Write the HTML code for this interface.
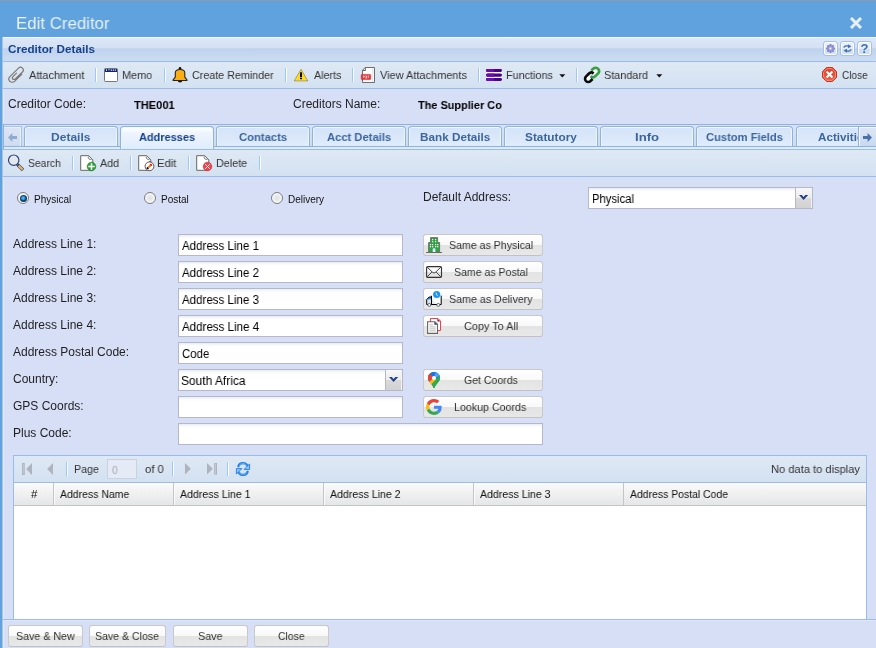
<!DOCTYPE html>
<html>
<head>
<meta charset="utf-8">
<title>Edit Creditor</title>
<style>
*{box-sizing:border-box;margin:0;padding:0}
html,body{width:876px;height:648px;overflow:hidden}
body{position:relative;background:#d6dff6;font-family:"Liberation Sans",sans-serif;font-size:11px;color:#333}
.a{position:absolute}
svg{position:absolute;overflow:visible}
.t{position:absolute;white-space:nowrap;line-height:14px;height:14px;transform-origin:0 50%;will-change:transform}
.sep{position:absolute;width:2px;height:14px;border-left:1px solid #98c8ff;border-right:1px solid #fff}
.inp{position:absolute;height:22px;background:#fff;border:1px solid #b5b8c8;background-image:linear-gradient(#e9ebf0,#f8f9fb 2px,#fff 4px)}
.btn{position:absolute;height:22px;border:1px solid #c9c9c9;border-bottom-color:#c2c2c2;border-radius:3px;background-image:linear-gradient(#ffffff,#f8f8f8 50%,#e3e3e3 50%,#e8e8e8)}
.tab{position:absolute;top:126px;height:20px;border:1px solid #8db2e3;border-bottom:none;border-radius:4px 4px 0 0;background-image:linear-gradient(#d6e4f8,#dae7fa 50%,#dfecfc);box-shadow:inset 0 1px 0 #f6faff,inset 1px 0 0 #f0f6fd,inset -1px 0 0 #f0f6fd}
.tab.act{background-image:linear-gradient(#ffffff,#eef4fd 30%,#deecfd);height:23px}
.radio{position:absolute;width:12px;height:12px;border-radius:50%;border:1px solid #7d7d7d;background:radial-gradient(circle at 50% 50%,#dde0e4 0,#e8eaec 35%,#f8f8f8 65%,#ffffff 100%)}
.trig{position:absolute;width:17px;height:22px;border:1px solid #b5b8c8;border-left:none;background-image:linear-gradient(#f8f8f8,#ececec 48%,#d9d9d9 52%,#d2d2d2);box-shadow:inset -1px 0 0 #f2f2f2}
.tool{position:absolute;top:41px;width:15px;height:15px;border:1px solid #a4c0ea;border-radius:3px;box-shadow:inset 0 0 0 1px #fff;background-image:linear-gradient(#e9f0fb,#e3ecfa 50%,#d0dff6 50%,#d3e1f7)}
.gh{position:absolute;top:483px;height:22px;border-right:1px solid #c5c5c5;border-left:1px solid #fbfbfb}
</style>
</head>
<body>
<!-- window frame + title bar -->
<div class="a" style="left:0;top:0;width:876px;height:648px;background:#5fa2dd"></div>
<div class="a" style="left:0;top:0;width:876px;height:1px;background:#8e9aac"></div>
<svg style="left:849px;top:16px" width="14" height="14" viewBox="0 0 14 14"><path d="M2 2 L12 12 M12 2 L2 12" stroke="#e8f0fa" stroke-width="3"/></svg>

<!-- window body -->
<div class="a" style="left:2px;top:37px;width:874px;height:611px;background:#d6dff6;border-left:1px solid #a6c3ec"></div>
<div class="a" style="left:3px;top:37px;width:1px;height:611px;background:#e3e9f9"></div>

<!-- panel header -->
<div class="a" style="left:3px;top:37px;width:873px;height:25px;border-top:1px solid #f6f9fe;border-bottom:1px solid #99bce8;background-image:linear-gradient(#dde8f7,#d4e1f4 42%,#bfd2ee 47%,#c3d5ef 62%,#cddcf2)"></div>
<div class="tool" style="left:823px"></div>
<div class="tool" style="left:840px"></div>
<div class="tool" style="left:857px"></div>
<!-- gear -->
<svg style="left:826px;top:44px" width="9" height="9" viewBox="0 0 9 9"><g stroke="#8587cc" stroke-width="2.1" stroke-linecap="round"><path d="M4.5 0.9V8.1M0.9 4.5H8.1M2 2L7 7M7 2L2 7"/></g><circle cx="4.5" cy="4.5" r="3.2" fill="#8587cc"/><circle cx="4.5" cy="4.5" r="2.2" fill="#a3a6dc"/><circle cx="4.5" cy="4.5" r="1" fill="#eef2fb"/></svg>
<!-- refresh arrows -->
<svg style="left:843px;top:44px" width="9" height="9" viewBox="0 0 9 9"><path d="M0.8 3.6 C1.4 1.8 4 1.4 6 2.2" fill="none" stroke="#3c70a8" stroke-width="1.3"/><path d="M5.2 0.2 L8.4 2.6 L5 4.2 Z" fill="#3c70a8"/><path d="M8.2 5.4 C7.6 7.2 5 7.6 3 6.8" fill="none" stroke="#3c70a8" stroke-width="1.3"/><path d="M3.8 8.8 L0.6 6.4 L4 4.8 Z" fill="#3c70a8"/></svg>
<!-- help -->
<div class="a" style="left:857px;top:41px;width:15px;height:15px;font:bold 13px/15px 'Liberation Sans',sans-serif;color:#3c70a8;text-align:center;will-change:transform">?</div>


<!-- toolbar -->
<div class="a" style="left:3px;top:62px;width:873px;height:27px;border-bottom:1px solid #99bce8;background-image:linear-gradient(#dfe9f5,#d3e1f1)"></div>
<div class="sep" style="left:95px;top:68px"></div>
<div class="sep" style="left:164px;top:68px"></div>
<div class="sep" style="left:285px;top:68px"></div>
<div class="sep" style="left:352px;top:68px"></div>
<div class="sep" style="left:478px;top:68px"></div>
<div class="sep" style="left:576px;top:68px"></div>
<!-- paperclip -->
<svg style="left:8px;top:67px" width="16" height="16" viewBox="0 0 16 16"><path d="M13.7 7.3 L6.6 14.3 C5.3 15.6 3.1 15.6 1.8 14.3 C0.5 13 0.6 11 1.9 9.7 L10.5 1.2 C11.6 0.1 13.4 0.1 14.5 1.2 C15.6 2.3 15.6 3.9 14.5 5 L7.3 12 C6.6 12.7 5.5 12.7 4.8 12 C4.1 11.3 4.2 10.3 4.9 9.6 L8.5 6.1" fill="none" stroke="#7b7876" stroke-width="1.15" stroke-linecap="round"/></svg>
<!-- memo -->
<svg style="left:104px;top:68px" width="14" height="14" viewBox="0 0 14 14"><rect x="0.5" y="0.5" width="13" height="13" rx="0.8" fill="#fff" stroke="#777" stroke-width="1"/><rect x="1" y="1" width="12" height="3" fill="#0d2474"/><path d="M2.5 1.3V3M4.3 1.8H5.8M7.3 1.3V3M9.3 1.3V3M11.3 1.3V3" stroke="#e8ecff" stroke-width="0.9"/></svg>
<!-- bell -->
<svg style="left:172px;top:67px" width="16" height="16" viewBox="0 0 16 16"><circle cx="8.05" cy="1.3" r="1.3" fill="#111"/><path d="M5.6 13.8 A2.5 2.2 0 0 0 10.5 13.8 Z" fill="#111"/><path d="M1.1 13.5 V12.8 L3.3 10.2 V5.8 C3.3 3.5 5.3 2.5 8.05 2.5 C10.8 2.5 12.8 3.5 12.8 5.8 V10.2 L15 12.8 V13.5 Z" fill="#fbad15" stroke="#242424" stroke-width="1.1" stroke-linejoin="round"/></svg>
<!-- warning -->
<svg style="left:294px;top:69px" width="14" height="13" viewBox="0 0 14 13"><path d="M7 0.5 L13.6 11.8 H0.4 Z" fill="#ffd91c" stroke="#7a6a16" stroke-width="0.7" stroke-linejoin="round"/><path d="M7 1.6 L12.6 11.2 H1.4 Z" fill="none" stroke="#ffe55a" stroke-width="0.5"/><rect x="6" y="3.3" width="2" height="5" fill="#0a0a0a"/><rect x="6" y="9" width="2" height="1.2" fill="#0a0a0a"/></svg>
<!-- pdf -->
<svg style="left:361px;top:67px" width="15" height="16" viewBox="0 0 15 16"><path d="M4.2 0.5 H13.5 V15.5 H1.5 V3.3 Z" fill="#fdfdfd" stroke="#6d6d6d" stroke-width="1" stroke-linejoin="round"/><path d="M11.6 1.2V14.8" stroke="#e6e6e6" stroke-width="1.2"/><path d="M4.4 0.8 V3.5 H1.6" fill="none" stroke="#555" stroke-width="0.9"/><rect x="0.2" y="7.4" width="9.5" height="5.2" rx="0.8" fill="#ea353d" stroke="#b8202a" stroke-width="0.5"/><path d="M2 9h1.2v1.2H2M4.3 9h1.3v2.2H4.3M6.8 9h1.4M6.8 10.2h1" stroke="#ffd0d0" stroke-width="0.9" fill="none"/></svg>
<!-- functions -->
<svg style="left:486px;top:69px" width="16" height="12" viewBox="0 0 16 12"><rect x="0" y="2.6" width="16" height="7" fill="#f3f7fb"/><rect x="0" y="0" width="16" height="2.9" rx="1.4" fill="#4b0087"/><rect x="0" y="4.4" width="16" height="3.3" rx="1.6" fill="#4b0087"/><rect x="0" y="9" width="16" height="2.9" rx="1.4" fill="#4b0087"/><path d="M1.4 0 H8 V2.9 H1.4 A1.4 1.4 0 0 1 1.4 0 Z M1.6 4.4 H8 V7.7 H1.6 A1.6 1.6 0 0 1 1.6 4.4 Z M1.4 9 H8 V11.9 H1.4 A1.4 1.4 0 0 1 1.4 9 Z" fill="#6a0cb0"/></svg>
<svg style="left:559px;top:74px" width="7" height="4" viewBox="0 0 7 4"><path d="M0.3 0.2 H6.3 L3.3 3.6 Z" fill="#111"/></svg>
<!-- link -->
<svg style="left:584px;top:67px" width="16" height="16" viewBox="0 0 16 16"><ellipse cx="10.6" cy="5" rx="2.6" ry="1.4" transform="rotate(-45 10.6 5)" fill="#fff"/><ellipse cx="4.4" cy="11.2" rx="2.4" ry="1.4" transform="rotate(-45 4.4 11.2)" fill="#fff"/><path d="M6.6 9.2 C8.2 10.6 10.2 10.4 11.4 9.2 L14.2 6.4 C15.4 5.2 15.6 3.2 14.2 1.8 C13 0.6 10.8 0.4 9.4 1.6 L7.2 3.4" fill="none" stroke="#37a040" stroke-width="2.6"/><path d="M9.6 6.4 C8 5 6.2 5.3 5 6.5 L2.1 9.4 C0.7 10.8 0.7 12.9 2 14.1 C3.2 15.3 5.3 15.3 6.5 14.1 L8.6 12" fill="none" stroke="#0a0a0a" stroke-width="2.6"/></svg>
<svg style="left:656px;top:74px" width="7" height="4" viewBox="0 0 7 4"><path d="M0.3 0.2 H6.3 L3.3 3.6 Z" fill="#111"/></svg>
<!-- close -->
<svg style="left:822px;top:67px" width="15" height="15" viewBox="0 0 15 15"><defs><linearGradient id="cg" x1="0" y1="0" x2="0" y2="1"><stop offset="0" stop-color="#e23a1f"/><stop offset="1" stop-color="#f2614a"/></linearGradient></defs><path d="M4.6 0.5 H10.4 L14.5 4.6 V10.4 L10.4 14.5 H4.6 L0.5 10.4 V4.6 Z" fill="url(#cg)" stroke="#c9321b" stroke-width="1"/><path d="M5 1.6 H10 L13.4 5 V10 L10 13.4 H5 L1.6 10 V5 Z" fill="none" stroke="#f4a090" stroke-width="0.8"/><path d="M4.6 4.6 L10.4 10.4 M10.4 4.6 L4.6 10.4" stroke="#fff" stroke-width="2.1"/></svg>


<!-- tab bar -->
<div class="a" style="left:3px;top:124px;width:873px;height:26px;border-top:1px solid #8db2e3;background-image:linear-gradient(#d7e3f4,#cbdbef)"></div>
<div class="a" style="left:3px;top:146px;width:873px;height:4px;background:#deecfd;border-top:1px solid #8db2e3;border-bottom:1px solid #99bce8"></div>
<div class="tab" style="left:24px;width:94px"></div>
<div class="tab act" style="left:120px;width:94px"></div>
<div class="tab" style="left:216px;width:94px"></div>
<div class="tab" style="left:312px;width:94px"></div>
<div class="tab" style="left:408px;width:94px"></div>
<div class="tab" style="left:504px;width:94px"></div>
<div class="tab" style="left:600px;width:94px"></div>
<div class="tab" style="left:696px;width:97px"></div>
<div class="tab" style="left:796px;width:94px"></div>
<!-- scrollers -->
<div class="a" style="left:3px;top:124px;width:1px;height:26px;background:#8db2e3;z-index:6"></div>
<div class="a" style="left:4px;top:126px;width:18px;height:20px;z-index:5;background-image:linear-gradient(#dde5f3,#cfdcf0);border-top:1px solid #a9c3ea;border-right:1px solid #a9c3ea;box-shadow:inset -1px 1px 0 #e9f0fa"></div>
<div class="a" style="left:858px;top:126px;width:18px;height:20px;z-index:5;background-image:linear-gradient(#dfe6f3,#d3dff2 55%,#c8d9f2);border-top:1px solid #8db2e3;border-left:1px solid #8db2e3;box-shadow:inset 1px 1px 0 #f4f8fd"></div>
<svg style="left:8px;top:133px;z-index:6" width="9" height="9" viewBox="0 0 9 9"><path d="M0 4.5 L4.4 0 V3 H9 V6 H4.4 V9 Z" fill="#8fabd2"/></svg>
<svg style="left:863px;top:133px;z-index:6" width="9" height="9" viewBox="0 0 9 9"><path d="M9 4.5 L4.6 0 V3 H0 V6 H4.6 V9 Z" fill="#4a72aa"/></svg>

<!-- tab toolbar -->
<div class="a" style="left:3px;top:150px;width:873px;height:27px;border-bottom:1px solid #99bce8;background-image:linear-gradient(#dfe9f5,#d3e1f1)"></div>
<div class="sep" style="left:72px;top:156px"></div>
<div class="sep" style="left:130px;top:156px"></div>
<div class="sep" style="left:188px;top:156px"></div>
<div class="sep" style="left:259px;top:156px"></div>
<!-- search -->
<svg style="left:8px;top:154px" width="17" height="17" viewBox="0 0 17 17"><path d="M9.4 10.4 L15 16" stroke="#2d4373" stroke-width="3.4"/><path d="M10.6 11.6 L14.6 15.6" stroke="#e9b262" stroke-width="2.2"/><circle cx="5.7" cy="6.2" r="5.2" fill="#e3e8ef" stroke="#2d4373" stroke-width="1.2"/></svg>
<!-- add -->
<svg style="left:80px;top:155px" width="17" height="16" viewBox="0 0 17 16"><path d="M0.7 0.7 H8.8 L12.8 4.9 V15.3 H0.7 Z" fill="#fff" stroke="#666" stroke-width="1" stroke-linejoin="round"/><path d="M8.9 1.4 C7.2 2.6 9 5.2 11.6 4.2" fill="#f2f2f2" stroke="#666" stroke-width="0.9"/><circle cx="11.5" cy="11.5" r="4.3" fill="#2fa037" stroke="#1f7a2a" stroke-width="0.6"/><path d="M11.5 8.3V14.7M8.3 11.5H14.7" stroke="#fff" stroke-width="1.5"/></svg>
<!-- edit -->
<svg style="left:138px;top:155px" width="17" height="16" viewBox="0 0 17 16"><path d="M0.7 0.7 H8.8 L12.8 4.9 V15.3 H0.7 Z" fill="#fff" stroke="#666" stroke-width="1" stroke-linejoin="round"/><path d="M8.9 1.4 C7.2 2.6 9 5.2 11.6 4.2" fill="#f2f2f2" stroke="#666" stroke-width="0.9"/><circle cx="11.5" cy="11.3" r="4.4" fill="#fff" stroke="#5b3e48" stroke-width="0.9"/><path d="M11.5 6.9V5.9" stroke="#5b3e48" stroke-width="0.8"/><path d="M9.6 13.3 L13.2 9.6" stroke="#d08a1a" stroke-width="2"/><path d="M9 13.9 L10.1 12.8" stroke="#000" stroke-width="2"/><path d="M12.5 10.3 L13.6 9.2" stroke="#f00" stroke-width="2.2"/></svg>
<!-- delete -->
<svg style="left:196px;top:155px" width="17" height="16" viewBox="0 0 17 16"><path d="M0.7 0.7 H8.8 L12.8 4.9 V15.3 H0.7 Z" fill="#fff" stroke="#666" stroke-width="1" stroke-linejoin="round"/><path d="M8.9 1.4 C7.2 2.6 9 5.2 11.6 4.2" fill="#f2f2f2" stroke="#666" stroke-width="0.9"/><circle cx="11.5" cy="11.5" r="4.3" fill="#f0434e" stroke="#c2303a" stroke-width="0.6"/><path d="M9.2 9.2L13.8 13.8M13.8 9.2L9.2 13.8" stroke="#fff" stroke-width="1"/></svg>


<!-- radios -->
<div class="radio" style="left:17px;top:192px"></div>
<div class="a" style="left:19.5px;top:194.5px;width:7px;height:7px;border-radius:50%;background:radial-gradient(circle 3.6px at 46% 44%,#8fe0f6 0,#35a8e6 25%,#2190d6 48%,#114273 72%,#0f3560 100%)"></div>
<div class="radio" style="left:144px;top:192px"></div>
<div class="radio" style="left:271px;top:192px"></div>
<div class="inp" style="left:588px;top:187px;width:208px"></div>
<div class="trig" style="left:796px;top:187px"></div>
<svg style="left:798.8px;top:195px" width="9.2" height="5.2" viewBox="0 0 9.2 5.2"><path d="M0 0 H2.8 L4.6 1.9 L6.4 0 H9.2 L4.6 5.1 Z" fill="#1f3f8a"/></svg>

<!-- fields -->
<div class="inp" style="left:178px;top:234px;width:225px"></div>
<div class="inp" style="left:178px;top:261px;width:225px"></div>
<div class="inp" style="left:178px;top:288px;width:225px"></div>
<div class="inp" style="left:178px;top:315px;width:225px"></div>
<div class="inp" style="left:178px;top:342px;width:225px"></div>
<div class="inp" style="left:178px;top:369px;width:208px"></div>
<div class="trig" style="left:386px;top:369px"></div>
<svg style="left:388.8px;top:377px" width="9.2" height="5.2" viewBox="0 0 9.2 5.2"><path d="M0 0 H2.8 L4.6 1.9 L6.4 0 H9.2 L4.6 5.1 Z" fill="#1f3f8a"/></svg>
<div class="inp" style="left:178px;top:396px;width:225px"></div>
<div class="inp" style="left:178px;top:423px;width:365px"></div>

<!-- side buttons -->
<div class="btn" style="left:423px;top:234px;width:120px"></div>
<div class="btn" style="left:423px;top:261px;width:120px"></div>
<div class="btn" style="left:423px;top:288px;width:120px"></div>
<div class="btn" style="left:423px;top:315px;width:120px"></div>
<div class="btn" style="left:423px;top:369px;width:120px"></div>
<div class="btn" style="left:423px;top:396px;width:120px"></div>
<!-- building -->
<svg style="left:426px;top:237px" width="16" height="16" viewBox="0 0 16 16"><path d="M2.6 15.3 V5.6 H4.6 V0.6 H11.6 V5.6 H13.6 V15.3 Z" fill="#2fa53f" stroke="#6d6672" stroke-width="0.9"/><path d="M0 15.5 H16" stroke="#6a6a6a" stroke-width="1"/><g fill="#fff"><rect x="6" y="2" width="1.2" height="1.2"/><rect x="9" y="2" width="1.2" height="1.2"/><rect x="6" y="4.1" width="1.2" height="1.2"/><rect x="9" y="4.1" width="1.2" height="1.2"/><rect x="3.9" y="7" width="1.2" height="1.2"/><rect x="6" y="7" width="1.2" height="1.2"/><rect x="9" y="7" width="1.2" height="1.2"/><rect x="11.1" y="7" width="1.2" height="1.2"/><rect x="3.9" y="9.1" width="1.2" height="1.2"/><rect x="6" y="9.1" width="1.2" height="1.2"/><rect x="9" y="9.1" width="1.2" height="1.2"/><rect x="11.1" y="9.1" width="1.2" height="1.2"/></g><path d="M6.5 15 V12.6 A1.6 1.6 0 0 1 9.7 12.6 V15 Z" fill="#7fd4e0"/><path d="M7.2 15 V12.6 A0.9 1 0 0 1 9 12.6 V15 Z" fill="#fff"/></svg>
<!-- envelope -->
<svg style="left:426px;top:266px" width="16" height="12" viewBox="0 0 16 12"><rect x="0.6" y="0.6" width="14.9" height="10.8" rx="1.2" fill="none" stroke="#333" stroke-width="1.1"/><path d="M1.2 1.2 L6.6 6.4 Q8 7.6 9.4 6.4 L14.8 1.2 M1.2 10.8 L6 5.9 M14.8 10.8 L10 5.9" fill="none" stroke="#333" stroke-width="0.9"/></svg>
<!-- truck -->
<svg style="left:426px;top:291px" width="16" height="16" viewBox="0 0 16 16"><path d="M5.6 4.6 H15 V13.4 H5.6 Z" fill="#fff"/><path d="M6 13.4 L6 7 L10 13.4 Z" fill="#e9e9e9"/><path d="M1.2 8.2 L3.4 6 H5.4 V8.6 H1.2 Z" fill="#1e96f5"/><path d="M5.5 4.8 V13.5 M15.2 4.6 V13.5 M5.5 6 H3.2 L0.7 8.6 V13.5 H2 M4.6 13.5 H9 M13.6 13.5 H15.2 M11.2 13.5 H9" fill="none" stroke="#000" stroke-width="1"/><circle cx="3.3" cy="13.9" r="1.5" fill="#fff" stroke="#4a5878" stroke-width="0.9"/><circle cx="12.3" cy="13.9" r="1.5" fill="#fff" stroke="#4a5878" stroke-width="0.9"/><circle cx="10.7" cy="3.5" r="3.6" fill="#1e96f5"/><path d="M10.4 1.8 V3.6 L11.6 4.8" fill="none" stroke="#fff" stroke-width="0.9"/></svg>
<!-- copy -->
<svg style="left:427px;top:318px" width="15" height="16" viewBox="0 0 15 16"><path d="M3.5 0.5 H11 L13.5 3 V12.5 H3.5 Z" fill="#fff" stroke="#f0404f" stroke-width="1"/><path d="M10.4 0.6 L13.4 3.6 H10.4 Z" fill="#9c1c3a"/><path d="M0.6 3.7 H8 L10.5 6.2 V15.4 H0.6 Z" fill="#fff" stroke="#666" stroke-width="1.1"/><path d="M7.4 3.8 L10.4 6.8 H7.4 Z" fill="#333c4c"/><path d="M2.4 6.9 H6 M2.4 8.9 H8.8 M2.4 10.9 H8.8 M2.4 12.9 H8.8" stroke="#aaa" stroke-width="0.8"/></svg>
<!-- gmaps -->
<svg style="left:428px;top:372px" width="12" height="16" viewBox="0 0 12 16"><defs><clipPath id="pin"><path d="M6 0 C2.7 0 0 2.6 0 5.9 C0 8.2 1.2 9.6 2.6 11.2 C4 12.8 4.9 14.2 5.3 15.4 C5.5 16.1 6.5 16.1 6.7 15.4 C7.1 14.2 8 12.8 9.4 11.2 C10.8 9.6 12 8.2 12 5.9 C12 2.6 9.3 0 6 0 Z"/></clipPath></defs><g clip-path="url(#pin)"><rect width="12" height="16" fill="#34a853"/><path d="M-1 -1 H13 V7 L6 6 L-1 12 Z" fill="#1a73e8"/><path d="M6 -1 H13 V7 L11.2 4 L6 6 L9.2 2 Z" fill="#4ba3f5"/><path d="M7.6 0.2 L12.5 3.5 L6 6 Z" fill="#4ba3f5"/><path d="M-1 2 L1.6 1.6 L6 6 L0.6 10.6 L-1 9 Z" fill="#ea4335"/><path d="M6 6 L0.4 10.4 L3.6 13 L8 8 Z" fill="#fbbc04"/><path d="M12.2 2.6 L13 9 L6 17 L3.4 12.6 Z" fill="#34a853"/></g><circle cx="6" cy="6" r="2.1" fill="#fff"/></svg>
<!-- google G -->
<svg style="left:426px;top:399px" width="16" height="16" viewBox="0 0 48 48"><path fill="#EA4335" d="M24 9.5c3.54 0 6.71 1.22 9.21 3.6l6.85-6.85C35.9 2.38 30.47 0 24 0 14.62 0 6.51 5.38 2.56 13.22l7.98 6.19C12.43 13.72 17.74 9.5 24 9.5z"/><path fill="#4285F4" d="M46.98 24.55c0-1.57-.15-3.09-.38-4.55H24v9.02h12.94c-.58 2.96-2.26 5.48-4.78 7.18l7.73 6c4.51-4.18 7.09-10.36 7.09-17.65z"/><path fill="#FBBC05" d="M10.53 28.59c-.48-1.45-.76-2.99-.76-4.59s.27-3.14.76-4.59l-7.98-6.19C.92 16.46 0 20.12 0 24c0 3.88.92 7.54 2.56 10.78l7.97-6.19z"/><path fill="#34A853" d="M24 48c6.48 0 11.93-2.13 15.89-5.81l-7.73-6c-2.15 1.45-4.92 2.3-8.16 2.3-6.26 0-11.57-4.22-13.47-9.91l-7.98 6.19C6.51 42.62 14.62 48 24 48z"/></svg>


<!-- grid -->
<div class="a" style="left:13px;top:455px;width:854px;height:165px;border:1px solid #99bce8;background:#fff"></div>
<div class="a" style="left:3px;top:619px;width:873px;height:1px;background:#99bce8"></div>
<div class="a" style="left:3px;top:620px;width:873px;height:1px;background:#e0e6f9"></div>
<div class="a" style="left:14px;top:456px;width:852px;height:27px;border-bottom:1px solid #99bce8;background-image:linear-gradient(#dfe9f5,#d3e1f1)"></div>
<div class="sep" style="left:66px;top:462px"></div>
<div class="inp" style="left:107px;top:459px;width:30px;height:20px;background:#e4ebf6;border-color:#c9d2e0;background-image:none"></div>
<div class="sep" style="left:172px;top:462px"></div>
<div class="sep" style="left:227px;top:462px"></div>
<svg style="left:22px;top:463px" width="10" height="12" viewBox="0 0 10 12"><rect x="0" y="0" width="2.7" height="12" fill="#aab0ba"/><rect x="0.8" y="0.6" width="1.1" height="10.8" fill="#c4c9d1"/><path d="M10 0 V12 L4.2 6 Z" fill="#aeb3bc"/></svg>
<svg style="left:47px;top:463px" width="6" height="12" viewBox="0 0 6 12"><path d="M6 0 V12 L0.2 6 Z" fill="#aeb3bc"/></svg>
<svg style="left:185px;top:463px" width="6" height="12" viewBox="0 0 6 12"><path d="M0 0 V11.6 L5.8 5.8 Z" fill="#aeb3bc"/></svg>
<svg style="left:207px;top:463px" width="10" height="12" viewBox="0 0 10 12"><path d="M0 0 V11.6 L5.8 5.8 Z" fill="#aeb3bc"/><rect x="7.2" y="0" width="2.8" height="11.6" fill="#aab0ba"/><rect x="8" y="0.6" width="1.1" height="10.4" fill="#c4c9d1"/></svg>
<!-- refresh -->
<svg style="left:236px;top:462px" width="14" height="14" viewBox="0 0 14 14"><path d="M2.4 4.2 C3.6 0.4 9.4 0 11.4 3.6" fill="none" stroke="#2483ec" stroke-width="2.3" stroke-linecap="round"/><path d="M3.2 3.4 C4.6 1.2 8.6 1 10.6 3.2" fill="none" stroke="#7dbcf8" stroke-width="0.8"/><path d="M13.6 1.9 V7.4 H8.1 Z" fill="#8fc6fa" stroke="#1f7ae6" stroke-width="0.9" stroke-linejoin="round"/><path d="M11.6 9.8 C10.4 13.6 4.6 14 2.6 10.4" fill="none" stroke="#2483ec" stroke-width="2.3" stroke-linecap="round"/><path d="M10.8 10.6 C9.4 12.8 5.4 13 3.4 10.8" fill="none" stroke="#7dbcf8" stroke-width="0.8"/><path d="M0.4 12.1 V6.6 H5.9 Z" fill="#8fc6fa" stroke="#1f7ae6" stroke-width="0.9" stroke-linejoin="round"/></svg>

<div class="a" style="left:14px;top:483px;width:852px;height:23px;border-bottom:1px solid #c5c5c5;background-image:linear-gradient(#fbfbfb,#f4f4f4 30%,#e5e6e8)"></div>
<div class="gh" style="left:14px;width:40px;border-left:none"></div>
<div class="gh" style="left:54px;width:120px"></div>
<div class="gh" style="left:174px;width:150px"></div>
<div class="gh" style="left:324px;width:150px"></div>
<div class="gh" style="left:474px;width:150px"></div>

<!-- footer -->
<div class="btn" style="left:8px;top:625px;width:75px"></div>
<div class="btn" style="left:89px;top:625px;width:77px"></div>
<div class="btn" style="left:173px;top:625px;width:75px"></div>
<div class="btn" style="left:254px;top:625px;width:75px"></div>

<div class="t" id="title" style="left:15.80px;top:16.80px;font-size:17px;color:#e9f1fa;transform:scaleX(0.9911);">Edit Creditor</div>
<div class="t" id="ph" style="left:8.39px;top:42.00px;font-size:11.5px;color:#15428b;font-weight:bold;transform:scaleX(1.0146);">Creditor Details</div>
<div class="t" id="t1" style="left:28.81px;top:68.00px;font-size:11.5px;color:#333;transform:scaleX(0.9529);">Attachment</div>
<div class="t" id="t2" style="left:122.30px;top:68.00px;font-size:11.5px;color:#333;transform:scaleX(0.9462);">Memo</div>
<div class="t" id="t3" style="left:192.19px;top:68.00px;font-size:11.5px;color:#333;transform:scaleX(0.9327);">Create Reminder</div>
<div class="t" id="t4" style="left:313.82px;top:68.00px;font-size:11.5px;color:#333;transform:scaleX(0.9292);">Alerts</div>
<div class="t" id="t5" style="left:380.00px;top:68.00px;font-size:11.5px;color:#333;transform:scaleX(0.9538);">View Attachments</div>
<div class="t" id="t6" style="left:506.00px;top:68.00px;font-size:11.5px;color:#333;transform:scaleX(0.9408);">Functions</div>
<div class="t" id="t7" style="left:603.88px;top:68.00px;font-size:11.5px;color:#333;transform:scaleX(0.9430);">Standard</div>
<div class="t" id="t8" style="left:842.00px;top:68.00px;font-size:11.5px;color:#333;transform:scaleX(0.8748);">Close</div>
<div class="t" id="f1" style="left:8.00px;top:97.00px;font-size:12px;color:#1f1f1f;">Creditor Code:</div>
<div class="t" id="f2" style="left:134.01px;top:98.00px;font-size:11.5px;color:#000;font-weight:bold;transform:scaleX(0.9628);">THE001</div>
<div class="t" id="f3" style="left:293.00px;top:97.00px;font-size:12px;color:#1f1f1f;">Creditors Name:</div>
<div class="t" id="f4" style="left:418.38px;top:98.00px;font-size:11.5px;color:#000;font-weight:bold;transform:scaleX(0.9505);">The Supplier Co</div>
<div class="t" id="tab1" style="left:51.20px;top:130.00px;font-size:11.5px;color:#3b669e;font-weight:bold;transform:scaleX(1.0460);">Details</div>
<div class="t" id="tab2" style="left:139.00px;top:130.00px;font-size:11.5px;color:#15428b;font-weight:bold;transform:scaleX(0.9539);">Addresses</div>
<div class="t" id="tab3" style="left:239.00px;top:130.00px;font-size:11.5px;color:#3b669e;font-weight:bold;transform:scaleX(0.9796);">Contacts</div>
<div class="t" id="tab4" style="left:327.00px;top:130.00px;font-size:11.5px;color:#3b669e;font-weight:bold;transform:scaleX(0.9742);">Acct Details</div>
<div class="t" id="tab5" style="left:419.93px;top:130.00px;font-size:11.5px;color:#3b669e;font-weight:bold;transform:scaleX(1.0197);">Bank Details</div>
<div class="t" id="tab6" style="left:525.01px;top:130.00px;font-size:11.5px;color:#3b669e;font-weight:bold;transform:scaleX(1.0268);">Statutory</div>
<div class="t" id="tab7" style="left:635.13px;top:130.00px;font-size:11.5px;color:#3b669e;font-weight:bold;transform:scaleX(1.1447);">Info</div>
<div class="t" id="tab8" style="left:705.99px;top:130.00px;font-size:11.5px;color:#3b669e;font-weight:bold;transform:scaleX(0.9718);">Custom Fields</div>
<div class="t" id="tab9" style="left:818.00px;top:130.00px;font-size:11.5px;color:#3b669e;font-weight:bold;transform:scaleX(1.0146);">Activities</div>
<div class="t" id="s1" style="left:27.71px;top:156.00px;font-size:11.5px;color:#333;transform:scaleX(0.9017);">Search</div>
<div class="t" id="s2" style="left:99.79px;top:156.00px;font-size:11.5px;color:#333;transform:scaleX(0.9309);">Add</div>
<div class="t" id="s3" style="left:157.48px;top:156.00px;font-size:11.5px;color:#333;transform:scaleX(0.9755);">Edit</div>
<div class="t" id="s4" style="left:215.73px;top:156.00px;font-size:11.5px;color:#333;transform:scaleX(0.9388);">Delete</div>
<div class="t" id="r1" style="left:34.00px;top:193.00px;font-size:10px;color:#111;">Physical</div>
<div class="t" id="r2" style="left:161.00px;top:193.00px;font-size:10px;color:#111;">Postal</div>
<div class="t" id="r3" style="left:288.00px;top:193.00px;font-size:10px;color:#111;">Delivery</div>
<div class="t" id="da" style="left:423.00px;top:190.00px;font-size:12px;color:#1f1f1f;">Default Address:</div>
<div class="t" id="c1" style="left:591.93px;top:192.00px;font-size:12.5px;color:#000;transform:scaleX(0.9022);">Physical</div>
<div class="t" id="l1" style="left:13.00px;top:237.00px;font-size:12px;color:#1f1f1f;">Address Line 1:</div>
<div class="t" id="l2" style="left:13.00px;top:264.00px;font-size:12px;color:#1f1f1f;">Address Line 2:</div>
<div class="t" id="l3" style="left:13.00px;top:291.00px;font-size:12px;color:#1f1f1f;">Address Line 3:</div>
<div class="t" id="l4" style="left:13.00px;top:318.00px;font-size:12px;color:#1f1f1f;">Address Line 4:</div>
<div class="t" id="l5" style="left:13.00px;top:345.00px;font-size:12px;color:#1f1f1f;">Address Postal Code:</div>
<div class="t" id="l6" style="left:13.00px;top:372.00px;font-size:12px;color:#1f1f1f;">Country:</div>
<div class="t" id="l7" style="left:13.00px;top:399.00px;font-size:12px;color:#1f1f1f;">GPS Coords:</div>
<div class="t" id="l8" style="left:13.00px;top:426.00px;font-size:12px;color:#1f1f1f;">Plus Code:</div>
<div class="t" id="i1" style="left:181.88px;top:239.00px;font-size:12.5px;color:#000;transform:scaleX(0.9229);">Address Line 1</div>
<div class="t" id="i2" style="left:181.88px;top:266.00px;font-size:12.5px;color:#000;transform:scaleX(0.9229);">Address Line 2</div>
<div class="t" id="i3" style="left:181.88px;top:293.00px;font-size:12.5px;color:#000;transform:scaleX(0.9229);">Address Line 3</div>
<div class="t" id="i4" style="left:182.48px;top:320.00px;font-size:12.5px;color:#000;transform:scaleX(0.9246);">Address Line 4</div>
<div class="t" id="i5" style="left:181.72px;top:347.00px;font-size:12.5px;color:#000;transform:scaleX(0.9129);">Code</div>
<div class="t" id="i6" style="left:181.19px;top:374.00px;font-size:12.5px;color:#000;transform:scaleX(0.9568);">South Africa</div>
<div class="t" id="b1" style="left:448.79px;top:238.00px;font-size:11.5px;color:#333;transform:scaleX(0.9205);">Same as Physical</div>
<div class="t" id="b2" style="left:454.14px;top:265.00px;font-size:11.5px;color:#333;transform:scaleX(0.9168);">Same as Postal</div>
<div class="t" id="b3" style="left:448.83px;top:292.00px;font-size:11.5px;color:#333;transform:scaleX(0.9276);">Same as Delivery</div>
<div class="t" id="b4" style="left:463.78px;top:319.00px;font-size:11.5px;color:#333;transform:scaleX(0.9473);">Copy To All</div>
<div class="t" id="b5" style="left:464.08px;top:373.00px;font-size:11.5px;color:#333;transform:scaleX(0.9160);">Get Coords</div>
<div class="t" id="b6" style="left:454.21px;top:400.00px;font-size:11.5px;color:#333;transform:scaleX(0.9266);">Lookup Coords</div>
<div class="t" id="g1" style="left:74.19px;top:462.00px;font-size:11.5px;color:#333;transform:scaleX(0.9273);">Page</div>
<div class="t" id="g0" style="left:111.99px;top:463.00px;font-size:11.5px;color:#a8a8a8;transform:scaleX(0.8825);">0</div>
<div class="t" id="g2" style="left:144.79px;top:462.00px;font-size:11.5px;color:#333;transform:scaleX(0.9789);">of 0</div>
<div class="t" id="g3" style="left:771.09px;top:462.00px;font-size:11.5px;color:#333;transform:scaleX(0.9664);">No data to display</div>
<div class="t" id="h0" style="left:31.02px;top:487.00px;font-size:11.5px;color:#111;transform:scaleX(1.0087);">#</div>
<div class="t" id="h1" style="left:59.87px;top:487.00px;font-size:11.5px;color:#111;transform:scaleX(0.9101);">Address Name</div>
<div class="t" id="h2" style="left:180.37px;top:487.00px;font-size:11.5px;color:#111;transform:scaleX(0.9203);">Address Line 1</div>
<div class="t" id="h3" style="left:330.37px;top:487.00px;font-size:11.5px;color:#111;transform:scaleX(0.9205);">Address Line 2</div>
<div class="t" id="h4" style="left:480.37px;top:487.00px;font-size:11.5px;color:#111;transform:scaleX(0.9200);">Address Line 3</div>
<div class="t" id="h5" style="left:630.37px;top:487.00px;font-size:11.5px;color:#111;transform:scaleX(0.9074);">Address Postal Code</div>
<div class="t" id="fb1" style="left:15.62px;top:629.00px;font-size:11.5px;color:#333;transform:scaleX(0.9273);">Save &amp; New</div>
<div class="t" id="fb2" style="left:95.07px;top:629.00px;font-size:11.5px;color:#333;transform:scaleX(0.9180);">Save &amp; Close</div>
<div class="t" id="fb3" style="left:197.66px;top:629.00px;font-size:11.5px;color:#333;transform:scaleX(0.9385);">Save</div>
<div class="t" id="fb4" style="left:278.07px;top:629.00px;font-size:11.5px;color:#333;transform:scaleX(0.9066);">Close</div>
</body>
</html>
